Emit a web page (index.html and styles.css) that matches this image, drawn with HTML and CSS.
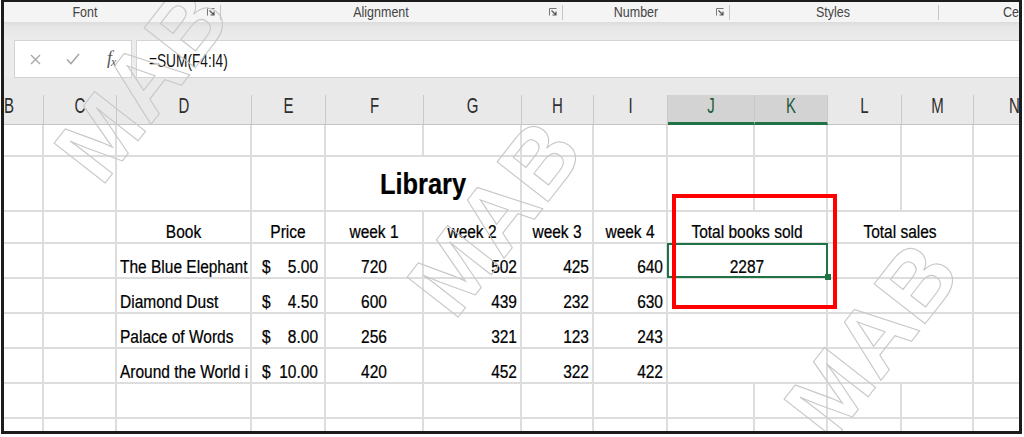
FILE: index.html
```html
<!DOCTYPE html>
<html>
<head>
<meta charset="utf-8">
<title>Library</title>
<link rel="stylesheet" href="styles.css">
</head>
<body>
<div class="frame">
  <div class="ribbon">
    <div class="grp g-font"><span class="lbl">Font</span><svg class="launch" width="8" height="8" viewBox="0 0 8 8"><path d="M0.5 7.5V0.5H7.5" fill="none" stroke="#777" stroke-width="1"/><path d="M2.5 2.5L6.5 6.5M7 3.5V7H3.5" fill="none" stroke="#555" stroke-width="1.2"/></svg></div>
    <div class="grp g-align"><span class="lbl">Alignment</span><svg class="launch" width="8" height="8" viewBox="0 0 8 8"><path d="M0.5 7.5V0.5H7.5" fill="none" stroke="#777" stroke-width="1"/><path d="M2.5 2.5L6.5 6.5M7 3.5V7H3.5" fill="none" stroke="#555" stroke-width="1.2"/></svg></div>
    <div class="grp g-num"><span class="lbl">Number</span><svg class="launch" width="8" height="8" viewBox="0 0 8 8"><path d="M0.5 7.5V0.5H7.5" fill="none" stroke="#777" stroke-width="1"/><path d="M2.5 2.5L6.5 6.5M7 3.5V7H3.5" fill="none" stroke="#555" stroke-width="1.2"/></svg></div>
    <div class="grp g-styles"><span class="lbl">Styles</span></div>
    <div class="grp g-cells"><span class="lbl">Cel</span></div>
  </div>
  <div class="band"></div>
  <div class="fbar">
    <div class="namebox">
      <svg class="ic-x" width="11" height="11" viewBox="0 0 11 11"><path d="M1 1L10 10M10 1L1 10" stroke="#a8a8a8" stroke-width="1.4" fill="none"/></svg>
      <svg class="ic-ok" width="14" height="12" viewBox="0 0 14 12"><path d="M1 6.5L5 10.5L13 1" stroke="#a8a8a8" stroke-width="1.6" fill="none"/></svg>
      <span class="fx">f<sub>x</sub></span>
    </div>
    <div class="input"><span class="ft">=SUM(F4:I4)</span></div>
  </div>
  <div class="strip"></div>
  <div class="sheet">
    <div class="h hb"><span class="t">B</span></div><div class="h"><span class="t">C</span></div><div class="h"><span class="t">D</span></div><div class="h"><span class="t">E</span></div><div class="h"><span class="t">F</span></div><div class="h"><span class="t">G</span></div><div class="h"><span class="t">H</span></div><div class="h"><span class="t">I</span></div><div class="h hs"><span class="t">J</span></div><div class="h hs"><span class="t">K</span></div><div class="h"><span class="t">L</span></div><div class="h"><span class="t">M</span></div><div class="h"><span class="t">N</span></div>

    <div class="c"></div><div class="c"></div><div class="c"></div><div class="c"></div><div class="c"></div><div class="c"></div><div class="c"></div><div class="c"></div><div class="c"></div><div class="c"></div><div class="c"></div><div class="c"></div><div class="c"></div>

    <div class="c"></div><div class="c"></div><div class="c"></div><div class="c"></div><div class="c title span2"><span class="t">Library</span></div><div class="c"></div><div class="c"></div><div class="c"></div><div class="c"></div><div class="c"></div><div class="c"></div><div class="c"></div>

    <div class="c"></div><div class="c"></div><div class="c ctr"><span class="t">Book</span></div><div class="c ctr"><span class="t">Price</span></div><div class="c ctr"><span class="t">week 1</span></div><div class="c ctr"><span class="t">week 2</span></div><div class="c ctr"><span class="t">week 3</span></div><div class="c ctr"><span class="t">week 4</span></div><div class="c ctr span2"><span class="t">Total books sold</span></div><div class="c ctr span2"><span class="t">Total sales</span></div><div class="c"></div>

    <div class="c"></div><div class="c"></div><div class="c l"><span class="t">The Blue Elephant</span></div><div class="c acc"><span class="t">$</span><span class="t">5.00</span></div><div class="c ctr"><span class="t">720</span></div><div class="c r"><span class="t">502</span></div><div class="c r"><span class="t">425</span></div><div class="c r"><span class="t">640</span></div><div class="c ctr span2 sel"><span class="t">2287</span></div><div class="c span2"></div><div class="c"></div>

    <div class="c"></div><div class="c"></div><div class="c l"><span class="t">Diamond Dust</span></div><div class="c acc"><span class="t">$</span><span class="t">4.50</span></div><div class="c ctr"><span class="t">600</span></div><div class="c r"><span class="t">439</span></div><div class="c r"><span class="t">232</span></div><div class="c r"><span class="t">630</span></div><div class="c span2"></div><div class="c span2"></div><div class="c"></div>

    <div class="c"></div><div class="c"></div><div class="c l"><span class="t">Palace of Words</span></div><div class="c acc"><span class="t">$</span><span class="t">8.00</span></div><div class="c ctr"><span class="t">256</span></div><div class="c r"><span class="t">321</span></div><div class="c r"><span class="t">123</span></div><div class="c r"><span class="t">243</span></div><div class="c span2"></div><div class="c span2"></div><div class="c"></div>

    <div class="c"></div><div class="c"></div><div class="c l"><span class="t">Around the World i</span></div><div class="c acc"><span class="t">$</span><span class="t">10.00</span></div><div class="c ctr"><span class="t">420</span></div><div class="c r"><span class="t">452</span></div><div class="c r"><span class="t">322</span></div><div class="c r"><span class="t">422</span></div><div class="c span2"></div><div class="c span2"></div><div class="c"></div>

    <div class="c"></div><div class="c"></div><div class="c"></div><div class="c"></div><div class="c"></div><div class="c"></div><div class="c"></div><div class="c"></div><div class="c"></div><div class="c"></div><div class="c"></div><div class="c"></div><div class="c"></div>

    <div class="c"></div><div class="c"></div><div class="c"></div><div class="c"></div><div class="c"></div><div class="c"></div><div class="c"></div><div class="c"></div><div class="c"></div><div class="c"></div><div class="c"></div><div class="c"></div><div class="c"></div>
  </div>
  <div class="redbox"></div>
  <span class="wm wm1">MAB</span>
  <span class="wm wm2">MAB</span>
  <span class="wm wm3">MAB</span>
</div>
</body>
</html>
```

FILE: styles.css
```css
html, body {
  margin: 0;
  padding: 0;
  background: #ffffff;
}

.frame {
  position: relative;
  margin-left: 1px;
  width: 1021px;
  height: 434px;
  box-sizing: border-box;
  border: 3px solid #1c1c1c;
  border-top-width: 2px;
  overflow: hidden;
  background: #ffffff;
  font-family: "Liberation Sans", Arial, sans-serif;
}

/* ribbon group labels */
.ribbon {
  display: flex;
  align-items: center;
  height: 20px;
  background: #f4f4f4;
  white-space: nowrap;
}
.grp {
  display: flex;
  align-items: center;
  flex: 0 0 auto;
  height: 15px;
  box-sizing: border-box;
  border-right: 1px solid #c6c6c6;
}
.lbl {
  display: block;
  text-align: center;
  font-size: 12.5px;
  line-height: 15px;
  color: #444444;
  transform: scaleY(1.15);
}
.launch {
  margin-left: auto;
  margin-right: 5px;
}
.g-font { width: 217px; }
.g-font .lbl { width: 162px; }
.g-align { width: 342px; }
.g-align .lbl { width: 320px; }
.g-num { width: 167px; }
.g-num .lbl { width: 146px; }
.g-styles { width: 209px; }
.g-styles .lbl { width: 206px; }
.g-cells { width: 76px; border-right: none; }
.g-cells .lbl { width: 76px; text-align: left; padding-left: 64px; box-sizing: border-box; }

.band {
  height: 18px;
  background: linear-gradient(#dcdcdc, #e7e7e7 5px, #ececec);
}

/* formula bar */
.fbar {
  display: flex;
  height: 38px;
  background: #ececec;
}
.namebox {
  display: flex;
  align-items: center;
  margin-left: 10px;
  width: 118px;
  box-sizing: border-box;
  background: #ffffff;
  border: 1px solid #d4d4d4;
}
.ic-x { margin-left: 15px; }
.ic-ok { margin-left: 25px; }
.fx {
  margin-left: 27px;
  font-family: "Liberation Serif", serif;
  font-style: italic;
  font-size: 18px;
  color: #555555;
}
.fx sub {
  font-size: 12px;
  vertical-align: -2px;
  margin-left: -1px;
}
.input {
  display: flex;
  align-items: center;
  flex: 1;
  margin-left: 4px;
  padding-left: 12px;
  padding-top: 8px;
  box-sizing: border-box;
  background: #ffffff;
  border: 1px solid #d4d4d4;
  border-right: none;
  color: #111111;
}
.ft {
  display: inline-block;
  font-size: 13.7px;
  line-height: 16px;
  transform: scaleY(1.3);
  transform-origin: center 12.75px;
}

.strip {
  height: 17px;
  background: #e9e9e9;
}

/* sheet grid */
.sheet {
  display: grid;
  grid-template-columns: 40px 73px 135px 74px 98px 98px 72px 74px 87px 73px 74px 72px 82px;
  grid-template-rows: 30px 32px 55px 32px repeat(6, 35px);
}
.t {
  display: inline-block;
  white-space: nowrap;
}
.h {
  display: flex;
  align-items: flex-end;
  justify-content: center;
  box-sizing: border-box;
  padding-bottom: 7px;
  background: #e9e9e9;
  border-right: 1px solid #c9c9c9;
  border-bottom: 1px solid #c4c4c4;
  color: #2e2e2e;
}
.h .t {
  font-size: 15px;
  line-height: 18px;
  transform: scaleY(1.45);
  transform-origin: center 14.2px;
}
.h.hb {
  justify-content: flex-start;
}
.h.hs {
  background: #d3d3d3;
  border-bottom: 3px solid #217346;
  padding-bottom: 5px;
  color: #1f5c3a;
}

.c {
  display: flex;
  align-items: flex-end;
  box-sizing: border-box;
  padding: 0 3px;
  border-right: 2px solid #dddddd;
  border-bottom: 2px solid #dddddd;
  color: #000000;
  white-space: nowrap;
  overflow: hidden;
}
.c .t {
  font-size: 15.5px;
  line-height: 19px;
  -webkit-text-stroke: 0.2px #000000;
  transform: scaleY(1.18);
  transform-origin: center 14.85px;
}
.span2 { grid-column: span 2; }
.ctr { justify-content: center; }
.l { justify-content: flex-start; }
.r { justify-content: flex-end; }
.acc {
  justify-content: space-between;
  padding: 0 6px 0 10px;
}
.c.title {
  justify-content: center;
  padding-bottom: 10px;
}
.c.title .t {
  font-weight: bold;
  font-size: 25.4px;
  line-height: 30px;
  color: #000000;
  transform: scaleY(1.15);
  transform-origin: center 23.8px;
}

.sel {
  position: relative;
  overflow: visible;
}
.sel::after {
  content: "";
  position: absolute;
  left: -1px;
  top: -1px;
  right: -2px;
  bottom: -1px;
  border: 2px solid #217346;
}
.sel::before {
  content: "";
  position: absolute;
  right: -5px;
  bottom: -3px;
  width: 6px;
  height: 6px;
  background: #217346;
  z-index: 2;
}

/* annotation overlay */
.redbox {
  position: absolute;
  left: 668px;
  top: 192px;
  width: 165px;
  height: 115px;
  box-sizing: border-box;
  border: 4px solid #ff0000;
}

/* watermark */
.wm {
  position: absolute;
  font-family: "Liberation Sans", sans-serif;
  font-weight: bold;
  font-size: 94px;
  line-height: 1;
  color: transparent;
  -webkit-text-stroke: 1.1px #c8c8c8;
  white-space: nowrap;
  transform: translate(-50%, -50%) rotate(-52deg);
  pointer-events: none;
}
.wm1 { left: 138px; top: 82px; }
.wm2 { left: 491px; top: 216px; }
.wm3 { left: 868px; top: 338px; }
```
